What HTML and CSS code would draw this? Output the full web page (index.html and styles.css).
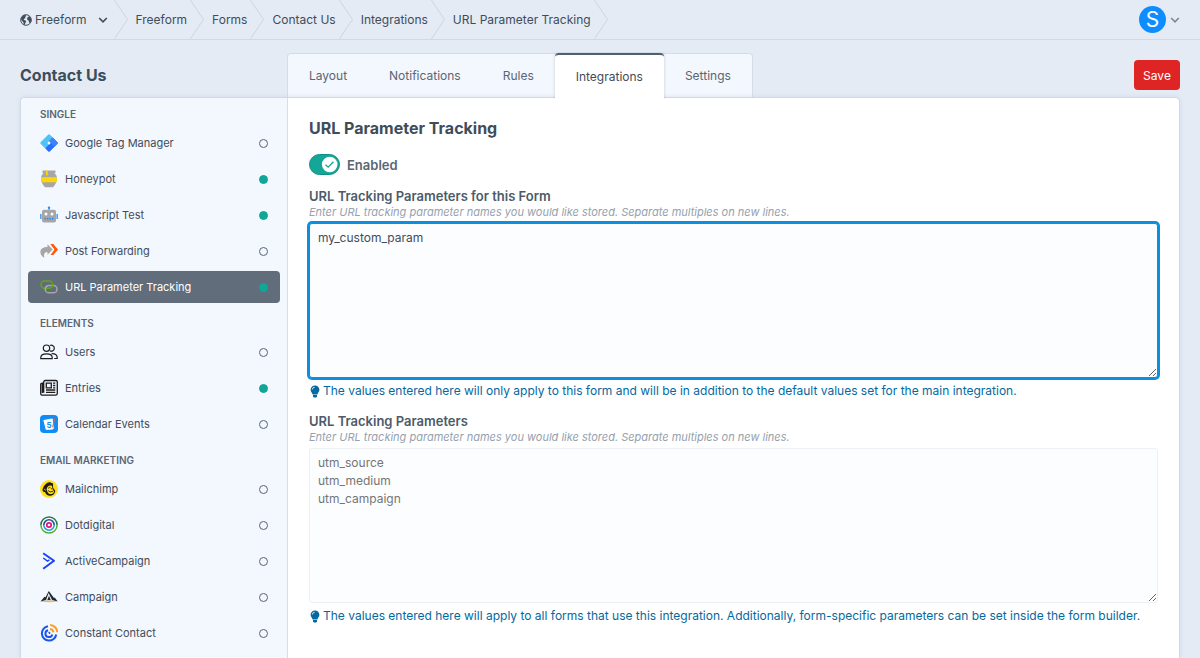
FILE: index.html
```html
<!DOCTYPE html>
<html lang="en">
<head>
    <meta charset="UTF-8">
    <meta name="viewport" content="width=device-width, initial-scale=1.0">
    <title>Contact Us - Freeform</title>
    <link rel="stylesheet" href="styles.css">
</head>
<body>
    <svg class="sprite" aria-hidden="true">
        <symbol id="crumb-arrow" viewBox="0 0 14 39">
            <path d="M0 -0.5 L13.5 19.5 L0 39.5" fill="none" stroke="#cbd5e3" stroke-width="1"/>
        </symbol>
        <symbol id="chevron" viewBox="0 0 10 6">
            <path d="M1.2 1 L5 4.8 L8.8 1" fill="none" stroke="currentColor" stroke-width="1.6"/>
        </symbol>
        <symbol id="bulb" viewBox="0 0 10 13">
            <path d="M5 0.4a4.4 4.4 0 0 0-4.4 4.4c0 1.8 1.3 2.7 2 4.6h4.8c.7-1.900 2-2.800 2-4.600A4.400 4.400 0 0 0 5 .4z" fill="currentColor"/>
            <path d="M3 10.100h4v1.200l-.8 1.300H3.800L3 11.300z" fill="currentColor"/>
            <path d="M2.300 4.600A2.500 2.500 0 0 1 4.700 2.200" fill="none" stroke="#fff" stroke-width=".8"/>
        </symbol>
    </svg>

    <header class="topbar">
        <nav class="crumbs" aria-label="Breadcrumbs">
            <button class="site-menu" type="button">
                <svg class="globe" viewBox="0 0 12 12">
                    <circle cx="6" cy="6" r="5.300" fill="none" stroke="currentColor" stroke-width="1"/>
                    <path d="M1 4.200L3 1.300 5.600.9 6.400 2 5 3l.6 1-1.400.8-.6 1.200 1.600.3 1 1.200-.9 1.500-.5 1.900-1.200-.6-.3-2.200L1.600 6.500z" fill="currentColor"/>
                    <path d="M7.600 3.300L9.300 2l1.800 2.700.2 2.200-1.300 2-1.100-.7-.2-1.600L7.400 6l-.3-1.300z" fill="currentColor"/>
                </svg>
                <span>Freeform</span>
                <svg class="chevron"><use href="#chevron"/></svg>
            </button>
            <svg class="arrow"><use href="#crumb-arrow"/></svg>
            <a href="#">Freeform</a>
            <svg class="arrow"><use href="#crumb-arrow"/></svg>
            <a href="#">Forms</a>
            <svg class="arrow"><use href="#crumb-arrow"/></svg>
            <a href="#">Contact Us</a>
            <svg class="arrow"><use href="#crumb-arrow"/></svg>
            <a href="#">Integrations</a>
            <svg class="arrow"><use href="#crumb-arrow"/></svg>
            <a href="#">URL Parameter Tracking</a>
            <svg class="arrow"><use href="#crumb-arrow"/></svg>
        </nav>
        <button class="account" type="button" aria-label="My account">
            <span class="avatar">S</span>
            <svg class="chevron"><use href="#chevron"/></svg>
        </button>
    </header>

    <div class="form-header">
        <h1>Contact Us</h1>
        <nav class="tabs">
            <a href="#">Layout</a>
            <a href="#">Notifications</a>
            <a href="#">Rules</a>
            <a href="#" class="active">Integrations</a>
            <a href="#">Settings</a>
        </nav>
        <button class="save" type="button">Save</button>
    </div>

    <div class="panel">
        <aside class="sidebar">
            <section>
                <h2>Single</h2>
                <ul>
                    <li><a href="#">
                        <svg class="icon" viewBox="0 0 18 18">
                            <path d="M9 .3Q9.600.3 10.200.9L17.200 7.900Q18.200 9 17.200 10.100L10.200 17.100Q9 18.200 7.900 17.100L.8 10.100Q-.2 9 .8 7.900L7.900.9Q8.400.3 9 .3z" fill="#4fc3f7"/>
                            <path d="M12.700 3.400L17.200 7.900Q18.200 9 17.200 10.100L10.200 17.100Q9 18.200 7.900 17.100L5.400 14.300 9 10.600 10.600 9 8.900 7.300z" fill="#2b6bff"/>
                            <path d="M12.700 3.400L17.200 7.900Q18.200 9 17.200 10.100L14.500 12.800 8.900 7.300z" fill="#3d84fb"/>
                            <path d="M9 7.300L10.700 9 9 10.700 7.300 9z" fill="#fff"/>
                        </svg>
                        <span class="name">Google Tag Manager</span><i class="dot"></i>
                    </a></li>
                    <li><a href="#">
                        <svg class="icon" viewBox="0 0 18 18">
                            <path d="M2.500.5h13v2.500h-1.200c2 1.600 2.700 3.400 2.700 5.700 0 3-1.500 5.800-4 8.500H5C2.500 14.500 1 11.700 1 8.700 1 6.400 1.700 4.600 3.700 3H2.500z" fill="#a6a6a6"/>
                            <path d="M1.200 7.200h15.600c.3 1.900.1 3.600-.4 5H1.600c-.5-1.400-.7-3.100-.4-5zM6 .5h1.700v4.200a.85.85 0 0 1-1.700 0z" fill="#ffd60a"/>
                        </svg>
                        <span class="name">Honeypot</span><i class="dot on"></i>
                    </a></li>
                    <li><a href="#">
                        <svg class="icon" viewBox="0 0 18 18">
                            <circle cx="9" cy="1.700" r="1.200" fill="#2b8cee"/>
                            <path d="M8.500 2h1v2h-1zM.2 8h1.300v5H.2zM16.500 8h1.300v5h-1.300z" fill="#2b8cee"/>
                            <rect x="2" y="3.800" width="14" height="12.700" rx="2" fill="#a6a6a6"/>
                            <circle cx="6" cy="8" r="1.500" fill="#fff"/><circle cx="12" cy="8" r="1.500" fill="#fff"/>
                            <path d="M4.500 12.700h9" stroke="#2b8cee" stroke-width="1.600" stroke-dasharray="1.500 1"/>
                        </svg>
                        <span class="name">Javascript Test</span><i class="dot on"></i>
                    </a></li>
                    <li><a href="#">
                        <svg class="icon" viewBox="0 0 18 18">
                            <path d="M10.500 2h2.600l4.700 5.500-4.700 5.500h-2.600l4.200-5.500z" fill="#ff5a0a"/>
                            <path d="M7.500 2.300L12.700 7.500 7.500 12.700V9.900C4.500 10 3.500 12 4.300 15.700 1.500 14.300.2 12 .4 9.500.7 6.500 3.400 5 7.500 5z" fill="#a6a6a6"/>
                            <path d="M10.500 2h2.600l4.700 5.500-4.700 5.500h-1.600l3-5.500z" fill="#ff5a0a"/>
                        </svg>
                        <span class="name">Post Forwarding</span><i class="dot"></i>
                    </a></li>
                    <li><a href="#" class="active">
                        <svg class="icon" viewBox="0 0 18 18">
                            <rect x="5.300" y="7.600" width="11.700" height="7.200" rx="3.600" fill="none" stroke="#a6a6a6" stroke-width="1.500"/>
                            <rect x="1" y="3" width="11.700" height="7.200" rx="3.600" fill="none" stroke="#63a615" stroke-width="1.500"/>
                            <path d="M5.300 11.200a3.600 3.600 0 0 1 2-3.200" fill="none" stroke="#a6a6a6" stroke-width="1.500"/>
                        </svg>
                        <span class="name">URL Parameter Tracking</span><i class="dot on"></i>
                    </a></li>
                </ul>
            </section>

            <section>
                <h2>Elements</h2>
                <ul>
                    <li><a href="#">
                        <svg class="icon" viewBox="0 0 18 18" fill="none" stroke="#1d1d1d" stroke-width="1.200">
                            <circle cx="6.500" cy="5.200" r="3.200"/>
                            <path d="M10 2.500a3 3 0 1 1 0 5.400M.8 15.600v-1c0-2.200 2.300-3.800 5.700-3.800s5.700 1.600 5.700 3.800v1zM11.600 10.600c3.500-.2 5.600 1.500 5.600 3.900v1h-3"/>
                        </svg>
                        <span class="name">Users</span><i class="dot"></i>
                    </a></li>
                    <li><a href="#">
                        <svg class="icon" viewBox="0 0 18 18" fill="none" stroke="#1d1d1d" stroke-width="1.300">
                            <path d="M3.700 13.800V3a1.500 1.500 0 0 1 1.500-1.500h10.600A1.500 1.500 0 0 1 17.300 3v11.400a1.800 1.800 0 0 1-1.800 1.800H2.500a1.800 1.800 0 0 1-1.800-1.800V5.600a1.500 1.500 0 0 1 1.500-1.500h.2v10"/>
                            <path d="M6.300 4.200h5v4.600h-5zM13 4.200h2.300M13 6.500h2.300M13 8.800h2.300M6 11h9.300M6 13.300h9.300"/>
                        </svg>
                        <span class="name">Entries</span><i class="dot on"></i>
                    </a></li>
                    <li><a href="#">
                        <svg class="icon" viewBox="0 0 18 18">
                            <rect width="18" height="18" rx="4" fill="#128cf5"/>
                            <path d="M3.300 5.200l9-2 2 10.500-7.800 1.500z" fill="#b7dcfc"/>
                            <path d="M3.500 5l9.300-1v10.600H5.700z" fill="#fff"/>
                            <text x="6.400" y="12.800" class="cal-day">5</text>
                            <path d="M15.200 3.500L13.200 11.500l-.8 1.300V11l1.800-7.700z" fill="#f0642c"/>
                        </svg>
                        <span class="name">Calendar Events</span><i class="dot"></i>
                    </a></li>
                </ul>
            </section>

            <section>
                <h2>Email Marketing</h2>
                <ul>
                    <li><a href="#">
                        <svg class="icon" viewBox="0 0 18 18">
                            <circle cx="9" cy="9" r="9" fill="#ffe01b"/>
                            <path d="M2.500 10C3 6.500 6 2.500 9.500 2.200c1.200-.1 1.500.5 1.500.9 1-.4 2.100 0 2 1.300.2 1.500-.3 2.500.5 4l1.800 2.300c-.3 3-2.500 5-5.300 5.100-2.500.1-4.200-1.400-4.800-3.500C3.500 12.200 2.500 11.300 2.500 10z" fill="#241c15"/>
                            <path d="M6.600 9.300C7 6.800 9 5 11.500 5.600c.9 1 .7 2.700 1.300 3.800l1.200 2c-.4 2-2.300 3-4.200 2.600-1.700-.4-2.500-2.200-3.200-4.700z" fill="#ffe01b"/>
                            <path d="M8.200 8.300q1.500-1.300 2.300-.5M11.800 8v1.300M8 10.500q1.500 2.500 5 .8M4 9.500q.8-1 1.300.2l.3 1" fill="none" stroke="#241c15" stroke-width=".9"/>
                            <path d="M4 9.500q.9-.9 1.200.2l.1.900" fill="none" stroke="#ffe01b" stroke-width=".7"/>
                        </svg>
                        <span class="name">Mailchimp</span><i class="dot"></i>
                    </a></li>
                    <li><a href="#">
                        <svg class="icon" viewBox="0 0 18 18" fill="none">
                            <circle cx="9" cy="9" r="8.800" fill="#fff"/>
                            <path d="M.9 9a8.100 8.100 0 0 1 16.200 0" stroke="#1e7a43" stroke-width="1.500"/>
                            <path d="M.9 9a8.100 8.100 0 0 0 16.200 0" stroke="#55ad32" stroke-width="1.500"/>
                            <path d="M3.800 9a5.200 5.200 0 0 1 10.400 0" stroke="#1f4e9e" stroke-width="1.600"/>
                            <path d="M3.800 9a5.200 5.200 0 0 0 10.400 0" stroke="#219fdc" stroke-width="1.600"/>
                            <circle cx="9" cy="9" r="2.200" stroke="#e5127d" stroke-width="1.700"/>
                        </svg>
                        <span class="name">Dotdigital</span><i class="dot"></i>
                    </a></li>
                    <li><a href="#">
                        <svg class="icon" viewBox="0 0 18 18" fill="none" stroke="#1545f5">
                            <path d="M3.200 1.200L14 8.800 3.200 16.700" stroke-width="2" stroke-linejoin="round"/>
                            <path d="M3.200 6L7.500 9.100 9.400 7.800" stroke-width="1.500"/>
                        </svg>
                        <span class="name">ActiveCampaign</span><i class="dot"></i>
                    </a></li>
                    <li><a href="#">
                        <svg class="icon" viewBox="0 0 18 18">
                            <path d="M.5 13.500L4.500 8.800l1 .4L8.800 3l5.200 7 .7-.5 3 4-6-1.500H6.500z" fill="#1f2a33"/>
                            <path d="M8.600 5L6 12h1.300L9 7.800l1.700 4.200h1.400z" fill="#eef2f6"/>
                            <path d="M.5 13.500l6-1.200h5l6.200 1.200q-8.700 1.600-17.200 0z" fill="#dcb88a"/>
                        </svg>
                        <span class="name">Campaign</span><i class="dot"></i>
                    </a></li>
                    <li><a href="#">
                        <svg class="icon" viewBox="0 0 18 18" fill="none" stroke-width="2">
                            <path d="M8 2.300a7.200 7.200 0 1 0 8.200 8.200" stroke="#1856ed"/>
                            <path d="M8.100 6.200a3.500 3.500 0 1 0 4.200 4.200" stroke="#1856ed"/>
                            <path d="M10.200 1A7.300 7.300 0 0 1 17.200 8.200M10 5a3.800 3.800 0 0 1 3.400 3.400" stroke="#ff9e1a"/>
                            <path d="M8.800 9.500l1.200-1.200" stroke="#1856ed"/>
                        </svg>
                        <span class="name">Constant Contact</span><i class="dot"></i>
                    </a></li>
                </ul>
            </section>
        </aside>

        <main class="content">
            <h2>URL Parameter Tracking</h2>

            <label class="toggle">
                <input type="checkbox" checked>
                <svg class="switch" viewBox="0 0 31 21">
                    <rect x="0.500" y="0.500" width="30" height="20" rx="10" fill="#14a697" stroke="#0f8f83"/>
                    <circle cx="20.700" cy="10.500" r="7.800" fill="#fff"/>
                    <path d="M16.500 10.700l2.700 2.500 5.200-5.400" fill="none" stroke="#14a697" stroke-width="1.300"/>
                </svg>
                <span>Enabled</span>
            </label>

            <div class="field">
                <label for="form-params">URL Tracking Parameters for this Form</label>
                <p class="hint">Enter URL tracking parameter names you would like stored. Separate multiples on new lines.</p>
                <textarea id="form-params" class="focused" spellcheck="false">my_custom_param</textarea>
                <p class="note"><svg><use href="#bulb"/></svg>The values entered here will only apply to this form and will be in addition to the default values set for the main integration.</p>
            </div>

            <div class="field">
                <label for="global-params">URL Tracking Parameters</label>
                <p class="hint">Enter URL tracking parameter names you would like stored. Separate multiples on new lines.</p>
                <textarea id="global-params" disabled>utm_source
utm_medium
utm_campaign</textarea>
                <p class="note"><svg><use href="#bulb"/></svg>The values entered here will apply to all forms that use this integration. Additionally, form-specific parameters can be set inside the form builder.</p>
            </div>
        </main>
    </div>

    <script>
        // put the cursor after the existing value
        let params = document.getElementById('form-params');
        params.focus();
        params.setSelectionRange(params.value.length, params.value.length);
    </script>
</body>
</html>
```
FILE: styles.css
```css
* {
    box-sizing: border-box;
}
body {
    display: flex;
    flex-direction: column;
    height: 100vh;
    margin: 0;
    overflow: hidden;
    background: #e4ebf5;
    color: #3f4d5a;
    font-family: Inter, "Liberation Sans", sans-serif;
    font-size: 12px;
}
h1, h2, p, ul {
    margin: 0;
    padding: 0;
}
ul {
    list-style: none;
}
a {
    color: inherit;
    text-decoration: none;
}
button {
    border: none;
    background: none;
    color: inherit;
    font: inherit;
    padding: 0;
    cursor: pointer;
}
.sprite {
    display: none;
}
.chevron {
    width: 10px;
    height: 6px;
}

/* top bar */
.topbar {
    display: flex;
    justify-content: space-between;
    flex: none;
    height: 40px;
    padding: 0 20px;
    border-bottom: 1px solid #d0dae6;
}
.crumbs {
    display: flex;
    align-items: center;
}
.crumbs a {
    padding: 0 3px 0 8px;
}
.arrow {
    width: 14px;
    height: 39px;
}
.site-menu {
    display: flex;
    align-items: center;
    padding-right: 6px;
}
.site-menu .chevron {
    margin-left: 11px;
}
.globe {
    width: 12px;
    height: 12px;
    margin-right: 3px;
}
.account {
    display: flex;
    align-items: center;
    gap: 4px;
    color: #7c8894;
}
.avatar {
    width: 27px;
    height: 27px;
    border-radius: 50%;
    background: #0d8dff;
    color: #fff;
    font-size: 21px;
    line-height: 27px;
    text-align: center;
}

/* title, tabs and save button */
.form-header {
    display: flex;
    flex: none;
    height: 57px;
    padding: 0 20px;
}
.form-header h1 {
    width: 267px;
    padding-top: 25px;
    font-size: 16px;
    line-height: 20px;
}
.tabs {
    display: flex;
    height: 44px;
    margin-top: 13px;
    border: 1px solid #d3dde9;
    border-bottom: none;
    border-radius: 4px 4px 0 0;
    background: #f3f7fe;
    color: #596673;
}
.tabs a {
    padding: 0 21px;
    line-height: 43px;
}
.tabs .active {
    position: relative;
    height: 46px;
    margin-top: -1px;
    border-top: 2px solid #515f6c;
    border-radius: 4px 4px 0 0;
    background: #fff;
    box-shadow: 0 0 3px rgba(81, 95, 108, 0.3);
    clip-path: inset(-1px -3px 0 -3px);
    color: #3f4d5a;
}
.save {
    width: 46px;
    height: 30px;
    margin: 20px 0 0 auto;
    border-radius: 4px;
    background: #df2425;
    color: #fff;
}

/* main panel */
.panel {
    display: flex;
    flex: 1;
    min-height: 0;
    margin: 0 20px;
    border: 1px solid #cfdae7;
    border-bottom: none;
    border-radius: 5px 5px 0 0;
    background: #fff;
    box-shadow: 0 0 4px rgba(150, 170, 200, 0.25);
}
.sidebar {
    display: flex;
    flex-direction: column;
    gap: 11px;
    flex: none;
    width: 267px;
    padding: 7px;
    overflow: hidden;
    border-right: 1px solid #d5deeb;
    border-radius: 5px 0 0 0;
    background: #f3f7fe;
}
.sidebar h2 {
    margin-bottom: 4px;
    padding-left: 12px;
    color: #596673;
    font-size: 10px;
    font-weight: 600;
    line-height: 18px;
    text-transform: uppercase;
}
.sidebar ul {
    display: flex;
    flex-direction: column;
    gap: 4px;
}
.sidebar a {
    display: flex;
    align-items: center;
    height: 32px;
    padding: 0 12px;
    border-radius: 4px;
    font-size: 11px;
}
.sidebar .active {
    background: #616d7a;
    color: #fff;
}
.icon {
    width: 18px;
    height: 18px;
    margin-right: 7px;
}
.cal-day {
    fill: #128cf5;
    font-size: 8px;
    font-weight: 700;
}
.name {
    flex: 1;
}
.dot {
    width: 9px;
    height: 9px;
    border: 1px solid #596673;
    border-radius: 50%;
}
.dot.on {
    border-color: #11a697;
    background: #11a697;
}

/* integration settings */
.content {
    flex: 1;
    min-width: 0;
    padding: 20px 21px;
}
.content h2 {
    font-size: 16px;
    line-height: 20px;
}
.toggle {
    display: flex;
    align-items: center;
    gap: 7px;
    margin: 16px 0 13px;
    color: #596673;
    font-size: 13px;
    font-weight: 600;
}
.toggle input {
    position: absolute;
    opacity: 0;
}
.switch {
    width: 31px;
    height: 21px;
}
.field {
    margin-bottom: 13px;
}
.field label {
    display: block;
    color: #4d5b68;
    font-size: 13px;
    font-weight: 600;
    line-height: 16px;
}
.hint {
    margin-bottom: 3px;
    color: #95a1ae;
    font-size: 11px;
    font-style: italic;
    line-height: 16px;
}
textarea {
    display: block;
    width: 100%;
    height: 155px;
    padding: 5px 8px;
    border: 1px solid #eef1f4;
    border-radius: 3px;
    outline: none;
    background: #fcfdff;
    color: #3f4d5a;
    font: inherit;
    line-height: 18px;
    resize: vertical;
}
textarea:disabled {
    color: #757575;
}
textarea.focused {
    border-color: #0d8fe0;
    box-shadow: 0 0 0 2px #0d8fe0;
}
.note {
    display: flex;
    align-items: center;
    gap: 3px;
    margin-top: 4px;
    color: #0369a1;
    line-height: 18px;
    white-space: nowrap;
}
.note svg {
    width: 10px;
    height: 13px;
    margin-left: 1px;
}
```
